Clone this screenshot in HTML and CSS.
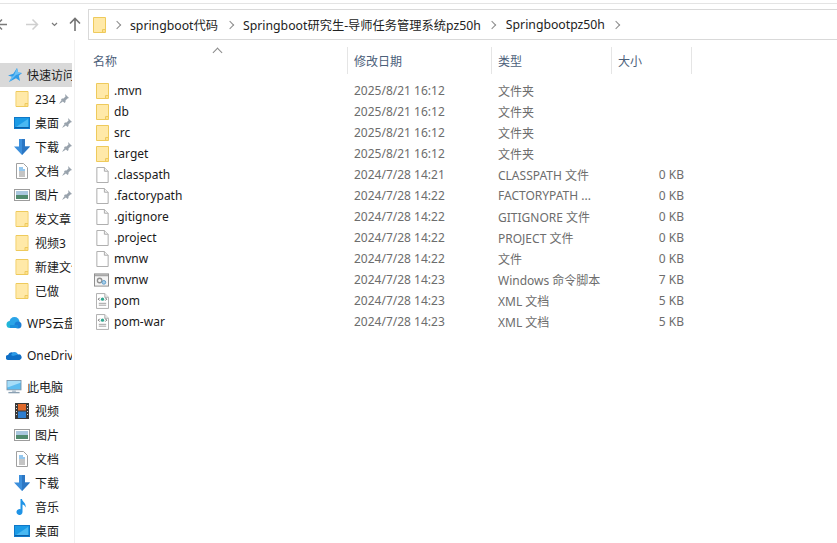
FILE: index.html
```html
<!DOCTYPE html>
<html lang="zh-CN">
<head>
    <meta charset="UTF-8">
    <title>Springbootpz50h</title>
    <link rel="stylesheet" href="styles.css">
</head>
<body>
<svg class="defs" width="0" height="0">
    <symbol id="i-folder" viewBox="0 0 13 16">
        <path d="M.5.5h12v15H.5z" fill="#ffe08c" stroke="#eeca5c"/>
        <path d="M1 1h11v11l-2 1v2H1z" fill="#ffe9a8"/>
        <path d="M9.5 15.5v-3h3" fill="none" stroke="#eeca5c"/>
    </symbol>
    <symbol id="i-file" viewBox="0 0 13 17">
        <path d="M.5.5h8l4 4v12H.5z" fill="#fff" stroke="#a9a9a9"/>
        <path d="M8.5.5v4h4" fill="#f2f2f2" stroke="#a9a9a9"/>
    </symbol>
    <symbol id="i-script" viewBox="0 0 16 14">
        <rect x=".5" y=".5" width="15" height="13" fill="#f4f4f4" stroke="#8a8a8a"/>
        <path d="M1 1h14v2H1z" fill="#a6a6a6"/>
        <circle cx="6" cy="7.5" r="2.4" fill="none" stroke="#8f8f8f" stroke-width="1.4"/>
        <circle cx="10.5" cy="9.5" r="2" fill="#a9cfe8" stroke="#5c9ac9"/>
    </symbol>
    <symbol id="i-xml" viewBox="0 0 14 17">
        <path d="M.5.5h9l4 4v12H.5z" fill="#fff" stroke="#a9a9a9"/>
        <path d="M9.5.5v4h4" fill="#eee" stroke="#a9a9a9"/>
        <path d="M4 5L2.500 6.500 4 8M10 5l1.500 1.500L10 8" fill="none" stroke="#555"/>
        <circle cx="7" cy="6.500" r="1.800" fill="#2fa58e"/>
        <path d="M3 11h8M3 13h8" stroke="#9a9a9a"/>
    </symbol>
    <symbol id="i-star" viewBox="0 0 14 14">
        <path d="M9 0l1.200 4.500L14 5l-3.200 2.800L12 13 8 10.300 1 14l3-5.200L0 7.500l5.300-1.800z" fill="#2f9be8"/>
        <path d="M9 0l1.200 4.500L14 5 8 7 1 14l3-5.200 2-1.500z" fill="#6cc0f5"/>
    </symbol>
    <symbol id="i-pin" viewBox="0 0 10 10">
        <path d="M6 0l4 4-1.500.5-2 2V8l-1 1-3.500-3.500 1-1h1.500l2-2z" fill="#98a2ac"/>
        <path d="M2.500 6L0 10l4-2.500z" fill="#98a2ac"/>
    </symbol>
    <symbol id="i-desktop" viewBox="0 0 16 12">
        <rect x=".5" y=".5" width="15" height="11" fill="#1b9be6" stroke="#0f78c8"/>
        <path d="M2 10L14 2v8z" fill="#49b8f2"/>
        <path d="M1 10h14v1H1z" fill="#0b5fa8"/>
    </symbol>
    <symbol id="i-down" viewBox="0 0 16 16">
        <path d="M5 0h6v7.500h5L8 16 0 7.500h5z" fill="#3c8fdc"/>
        <path d="M8 0h3v7.500h5L8 16z" fill="#2c77c4"/>
    </symbol>
    <symbol id="i-doc" viewBox="0 0 12 16">
        <path d="M.5.5h7l4 4v11H.5z" fill="#fff" stroke="#a0a0a0"/>
        <path d="M3 5h4M3 7h6" stroke="#2b8fdc"/>
        <path d="M3 9h6M3 11h6M3 13h6" stroke="#8a8a8a"/>
    </symbol>
    <symbol id="i-picture" viewBox="0 0 16 12">
        <rect x=".5" y=".5" width="15" height="11" fill="#fff" stroke="#9c9c9c"/>
        <path d="M2 2h12v4H2z" fill="#a9c7de"/>
        <path d="M2 6h12v4H2z" fill="#4f8a6d"/>
    </symbol>
    <symbol id="i-cloud" viewBox="0 0 16 12">
        <circle cx="4" cy="7.500" r="3.500" fill="#20b6d8"/>
        <circle cx="8.500" cy="5" r="5" fill="#2ba4e8"/>
        <circle cx="12" cy="8" r="3.500" fill="#1c7fd6"/>
        <path d="M4 8h8v3H4z" fill="#1c8fdc"/>
    </symbol>
    <symbol id="i-onedrive" viewBox="0 0 16 10">
        <path d="M2.500 10a2.500 2.500 0 0 1-.5-5 4 4 0 0 1 5-2.500A4.500 4.500 0 0 1 12 4.500 2.800 2.800 0 0 1 13.500 10z" fill="#0f6fc6"/>
        <path d="M7 2.500A4.500 4.500 0 0 1 12 4.500L7 6 5 5z" fill="#2b9be8"/>
    </symbol>
    <symbol id="i-pc" viewBox="0 0 16 15">
        <rect x=".5" y=".5" width="15" height="10" fill="#5cbcf0" stroke="#7d97ac"/>
        <path d="M1 1h14v2L1 8z" fill="#a6ddf8"/>
        <path d="M6 11h4v2H6z" fill="#b7c6d2"/>
        <path d="M2 13.500h12" stroke="#8aa0b2" stroke-width="1.500"/>
    </symbol>
    <symbol id="i-video" viewBox="0 0 14 16">
        <path d="M0 0h14v16H0z" fill="#3a3a3a"/>
        <path d="M3 1h8v6.500H3z" fill="#e06a2c"/>
        <path d="M3 8.500h8V15H3z" fill="#2f7fd0"/>
        <path d="M1 2h1v1H1zm0 3h1v1H1zm0 3h1v1H1zm0 3h1v1H1zm11-9h1v1h-1zm0 3h1v1h-1zm0 3h1v1h-1zm0 3h1v1h-1z" fill="#ddd"/>
    </symbol>
    <symbol id="i-music" viewBox="0 0 10 16">
        <path d="M3.500 0H5c.300 3 4.500 4 3.500 8.500C8 6.500 6.500 5.500 5.500 5.500V13a3 3 0 1 1-2-2.800z" fill="#1f93e6"/>
    </symbol>
</svg>

<header class="toolbar">
    <svg class="nav-icons" width="88" height="31" viewBox="0 0 88 31">
        <path d="M-3 15.500h10M2 10.500l-5 5 5 5" stroke="#7a7a7a" stroke-width="1.500" fill="none"/>
        <path d="M26 15.500h11M32.500 10.500l5 5-5 5" stroke="#cfcfcf" stroke-width="1.500" fill="none"/>
        <path d="M52 14l2.500 2.500L57 14" stroke="#7a7a7a" stroke-width="1.200" fill="none"/>
        <path d="M75 22V10M70 14.500l5-5 5 5" stroke="#737373" stroke-width="1.600" fill="none"/>
    </svg>
    <nav class="address">
        <svg class="addr-folder"><use href="#i-folder"/></svg>
        <span class="sep first"></span>
        <span class="crumb">springboot代码</span>
        <span class="sep"></span>
        <span class="crumb">Springboot研究生-导师任务管理系统pz50h</span>
        <span class="sep"></span>
        <span class="crumb">Springbootpz50h</span>
        <span class="sep"></span>
    </nav>
</header>

<div class="main">
    <aside class="sidebar">
        <div class="side-row quick"><svg class="ic-star"><use href="#i-star"/></svg><span class="side-label">快速访问</span></div>
        <div class="side-row sub"><svg class="ic"><use href="#i-folder"/></svg><span class="side-label">234</span><svg class="pin"><use href="#i-pin"/></svg></div>
        <div class="side-row sub"><svg class="ic"><use href="#i-desktop"/></svg><span class="side-label">桌面</span><svg class="pin"><use href="#i-pin"/></svg></div>
        <div class="side-row sub"><svg class="ic"><use href="#i-down"/></svg><span class="side-label">下载</span><svg class="pin"><use href="#i-pin"/></svg></div>
        <div class="side-row sub"><svg class="ic"><use href="#i-doc"/></svg><span class="side-label">文档</span><svg class="pin"><use href="#i-pin"/></svg></div>
        <div class="side-row sub"><svg class="ic"><use href="#i-picture"/></svg><span class="side-label">图片</span><svg class="pin"><use href="#i-pin"/></svg></div>
        <div class="side-row sub"><svg class="ic"><use href="#i-folder"/></svg><span class="side-label">发文章</span></div>
        <div class="side-row sub"><svg class="ic"><use href="#i-folder"/></svg><span class="side-label">视频3</span></div>
        <div class="side-row sub"><svg class="ic"><use href="#i-folder"/></svg><span class="side-label">新建文件夹</span></div>
        <div class="side-row sub"><svg class="ic"><use href="#i-folder"/></svg><span class="side-label">已做</span></div>

        <div class="side-row group"><svg class="ic-head"><use href="#i-cloud"/></svg><span class="side-label">WPS云盘</span></div>
        <div class="side-row group"><svg class="ic-head"><use href="#i-onedrive"/></svg><span class="side-label">OneDrive</span></div>

        <div class="side-row group"><svg class="ic-head"><use href="#i-pc"/></svg><span class="side-label">此电脑</span></div>
        <div class="side-row sub"><svg class="ic"><use href="#i-video"/></svg><span class="side-label">视频</span></div>
        <div class="side-row sub"><svg class="ic"><use href="#i-picture"/></svg><span class="side-label">图片</span></div>
        <div class="side-row sub"><svg class="ic"><use href="#i-doc"/></svg><span class="side-label">文档</span></div>
        <div class="side-row sub"><svg class="ic"><use href="#i-down"/></svg><span class="side-label">下载</span></div>
        <div class="side-row sub"><svg class="ic"><use href="#i-music"/></svg><span class="side-label">音乐</span></div>
        <div class="side-row sub"><svg class="ic"><use href="#i-desktop"/></svg><span class="side-label">桌面</span></div>
    </aside>

    <section class="files">
        <div class="file-head">
            <span class="sort-arrow"></span>
            <div class="col-head first">名称</div>
            <div class="col-head">修改日期</div>
            <div class="col-head">类型</div>
            <div class="col-head">大小</div>
        </div>

        <div class="file-row"><div class="name"><svg class="file-ic"><use href="#i-folder"/></svg>.mvn</div><div>2025/8/21 16:12</div><div>文件夹</div><div class="size"></div></div>
        <div class="file-row"><div class="name"><svg class="file-ic"><use href="#i-folder"/></svg>db</div><div>2025/8/21 16:12</div><div>文件夹</div><div class="size"></div></div>
        <div class="file-row"><div class="name"><svg class="file-ic"><use href="#i-folder"/></svg>src</div><div>2025/8/21 16:12</div><div>文件夹</div><div class="size"></div></div>
        <div class="file-row"><div class="name"><svg class="file-ic"><use href="#i-folder"/></svg>target</div><div>2025/8/21 16:12</div><div>文件夹</div><div class="size"></div></div>
        <div class="file-row"><div class="name"><svg class="file-ic"><use href="#i-file"/></svg>.classpath</div><div>2024/7/28 14:21</div><div>CLASSPATH 文件</div><div class="size">0 KB</div></div>
        <div class="file-row"><div class="name"><svg class="file-ic"><use href="#i-file"/></svg>.factorypath</div><div>2024/7/28 14:22</div><div>FACTORYPATH ...</div><div class="size">0 KB</div></div>
        <div class="file-row"><div class="name"><svg class="file-ic"><use href="#i-file"/></svg>.gitignore</div><div>2024/7/28 14:22</div><div>GITIGNORE 文件</div><div class="size">0 KB</div></div>
        <div class="file-row"><div class="name"><svg class="file-ic"><use href="#i-file"/></svg>.project</div><div>2024/7/28 14:22</div><div>PROJECT 文件</div><div class="size">0 KB</div></div>
        <div class="file-row"><div class="name"><svg class="file-ic"><use href="#i-file"/></svg>mvnw</div><div>2024/7/28 14:22</div><div>文件</div><div class="size">0 KB</div></div>
        <div class="file-row"><div class="name"><svg class="file-ic wide"><use href="#i-script"/></svg>mvnw</div><div>2024/7/28 14:23</div><div>Windows 命令脚本</div><div class="size">7 KB</div></div>
        <div class="file-row"><div class="name"><svg class="file-ic"><use href="#i-xml"/></svg>pom</div><div>2024/7/28 14:23</div><div>XML 文档</div><div class="size">5 KB</div></div>
        <div class="file-row"><div class="name"><svg class="file-ic"><use href="#i-xml"/></svg>pom-war</div><div>2024/7/28 14:23</div><div>XML 文档</div><div class="size">5 KB</div></div>
    </section>
</div>
</body>
</html>
```

FILE: styles.css
```css
* {
    box-sizing: border-box;
}

html, body {
    height: 100%;
}

body {
    margin: 0;
    background: #fff;
    color: #1a1a1a;
    font-family: "Noto Sans", "Noto Sans CJK SC", sans-serif;
    font-size: 12px;
    overflow: hidden;
    display: flex;
    flex-direction: column;
}

.defs {
    display: none;
}

/* top bar */
.toolbar {
    height: 37px;
    flex: none;
    display: flex;
    padding-top: 5px;
    margin-top: 3px;
    border-top: 1px solid #e4e4e4;
}

.nav-icons {
    flex: none;
}

.address {
    flex: 1;
    display: flex;
    align-items: center;
    height: 31px;
    border: 1px solid #d9d9d9;
    border-right: 0;
    padding-left: 4px;
    font-size: 12.25px;
    color: #222;
}

.addr-folder {
    width: 13px;
    height: 16px;
    flex: none;
}

/* chevron between path parts */
.sep {
    width: 25px;
    flex: none;
    display: flex;
    justify-content: center;
}

.sep.first {
    width: 24px;
}

.sep::after {
    content: '';
    width: 5px;
    height: 5px;
    margin-left: -2px;
    border-right: 1.5px solid #8c8c8c;
    border-top: 1.5px solid #8c8c8c;
    transform: rotate(45deg);
}

.crumb {
    white-space: nowrap;
}

/* layout */
.main {
    flex: 1;
    display: flex;
    min-height: 0;
}

.sidebar {
    width: 75px;
    flex: none;
    padding-top: 23px;
    border-right: 1px solid #f0f0f0;
    overflow: hidden;
}

.side-row {
    width: 72px;
    height: 24px;
    display: flex;
    align-items: center;
    overflow: hidden;
    white-space: nowrap;
    color: #1a1a1a;
}

.quick {
    background: #d9d9d9;
    padding-left: 8px;
}

.sub {
    padding-left: 14px;
}

.group {
    padding-left: 6px;
    margin-top: 8px;
}

.ic-star {
    width: 14px;
    height: 14px;
    flex: none;
    margin-right: 5px;
}

.ic-head {
    width: 16px;
    height: 14px;
    flex: none;
    margin-right: 5px;
}

.ic {
    width: 16px;
    height: 16px;
    flex: none;
    margin-right: 5px;
}

.pin {
    width: 10px;
    height: 10px;
    flex: none;
    margin-left: 3px;
}

.side-label {
    flex: none;
}

/* file list */
.files {
    flex: 1;
    min-width: 0;
    padding-left: 13px;
}

.file-head {
    position: relative;
    display: grid;
    grid-template-columns: 260px 144px 120px 80px;
    height: 27px;
    margin-top: 7px;
    margin-bottom: 6px;
}

.col-head {
    display: flex;
    align-items: center;
    padding-left: 6px;
    color: #4c607a;
    border-right: 1px solid #e5e5e5;
}

.col-head.first {
    padding-left: 5px;
}

.sort-arrow {
    position: absolute;
    left: 126px;
    top: 2px;
    width: 7px;
    height: 7px;
    border-left: 1px solid #8a8a8a;
    border-top: 1px solid #8a8a8a;
    transform: rotate(45deg);
}

.file-row {
    display: grid;
    grid-template-columns: 259px 144px 113px 80px;
    height: 21px;
    align-items: center;
    color: #6d6d6d;
    white-space: nowrap;
}

.file-row > div {
    padding-left: 7px;
}

.file-row .name {
    display: flex;
    align-items: center;
    padding-left: 8px;
    color: #1a1a1a;
}

.file-ic {
    width: 13px;
    height: 16px;
    flex: none;
    margin-right: 5px;
}

.file-ic.wide {
    width: 15px;
    height: 14px;
    margin-left: -2px;
    margin-right: 5px;
}

.file-row .size {
    padding-left: 0;
    text-align: right;
}
```
